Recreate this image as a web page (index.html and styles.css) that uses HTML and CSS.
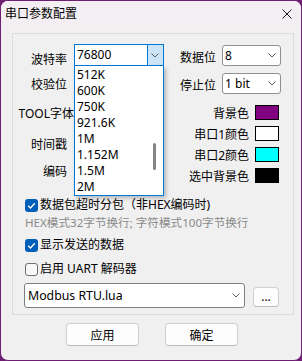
FILE: index.html
```html
<!DOCTYPE html>
<html lang="zh-CN">
<head>
    <meta charset="utf-8">
    <title>串口参数配置</title>
    <link rel="stylesheet" href="styles.css">
</head>
<body>
    <div class="window">
        <div class="titlebar">
            <span class="title">串口参数配置</span>
            <span class="close">
                <svg width="10" height="10" viewBox="0 0 10 10"><path d="M0.5 0.5 L9.5 9.5 M9.5 0.5 L0.5 9.5" stroke="#1b1b1b" stroke-width="1" fill="none"/></svg>
            </span>
        </div>

        <div class="group">
            <div class="top">
                <div class="left-labels">
                    <span class="lbl">波特率</span>
                    <span class="lbl">校验位</span>
                    <span class="lbl lbl-font">TOOL字体</span>
                    <span class="lbl">时间戳</span>
                    <span class="lbl">编码</span>
                </div>

                <div class="left-fields">
                    <div class="combo combo-open">
                        <span class="combo-text">76800</span>
                        <span class="combo-btn">
                            <svg class="chev" width="8" height="5" viewBox="0 0 8 5"><path d="M0.5 0.5 L4 4 L7.5 0.5" stroke="#5c5c5c" fill="none"/></svg>
                        </span>
                        <ul class="droplist">
                            <li>512K</li>
                            <li>600K</li>
                            <li>750K</li>
                            <li>921.6K</li>
                            <li>1M</li>
                            <li>1.152M</li>
                            <li>1.5M</li>
                            <li>2M</li>
                            <span class="thumb"></span>
                        </ul>
                    </div>
                </div>

                <div class="right">
                    <div class="field">
                        <span class="lbl">数据位</span>
                        <div class="combo combo-small">
                            <span class="combo-text">8</span>
                            <svg class="chev" width="8" height="5" viewBox="0 0 8 5"><path d="M0.5 0.5 L4 4 L7.5 0.5" stroke="#5c5c5c" fill="none"/></svg>
                        </div>
                    </div>
                    <div class="field">
                        <span class="lbl">停止位</span>
                        <div class="combo combo-small">
                            <span class="combo-text">1 bit</span>
                            <svg class="chev" width="8" height="5" viewBox="0 0 8 5"><path d="M0.5 0.5 L4 4 L7.5 0.5" stroke="#5c5c5c" fill="none"/></svg>
                        </div>
                    </div>

                    <div class="colors">
                        <div class="color-row"><span class="lbl">背景色</span><span class="swatch swatch-purple"></span></div>
                        <div class="color-row"><span class="lbl">串口1颜色</span><span class="swatch swatch-white"></span></div>
                        <div class="color-row"><span class="lbl">串口2颜色</span><span class="swatch swatch-cyan"></span></div>
                        <div class="color-row"><span class="lbl">选中背景色</span><span class="swatch swatch-black"></span></div>
                    </div>
                </div>
            </div>

            <div class="options">
                <div class="check check-on">
                    <span class="box"><svg width="13" height="13" viewBox="0 0 13 13"><path d="M3.2 6.7 L5.5 9 L9.8 4.3" stroke="#fff" stroke-width="1.3" fill="none"/></svg></span>
                    <span>数据包超时分包（非HEX编码时)</span>
                </div>
                <div class="hint">HEX模式32字节换行; 字符模式100字节换行</div>
                <div class="check check-on check-2">
                    <span class="box"><svg width="13" height="13" viewBox="0 0 13 13"><path d="M3.2 6.7 L5.5 9 L9.8 4.3" stroke="#fff" stroke-width="1.3" fill="none"/></svg></span>
                    <span>显示发送的数据</span>
                </div>
                <div class="check check-3">
                    <span class="box"></span>
                    <span>启用 UART 解码器</span>
                </div>
            </div>

            <div class="script-row">
                <div class="combo combo-wide">
                    <span class="combo-text">Modbus RTU.lua</span>
                    <svg class="chev" width="8" height="5" viewBox="0 0 8 5"><path d="M0.5 0.5 L4 4 L7.5 0.5" stroke="#5c5c5c" fill="none"/></svg>
                </div>
                <button class="btn btn-more">...</button>
            </div>
        </div>

        <div class="actions">
            <button class="btn btn-action">应用</button>
            <button class="btn btn-action">确定</button>
        </div>
    </div>
</body>
</html>
```

FILE: styles.css
```css
* {
    box-sizing: border-box;
}

html,
body {
    margin: 0;
}

body {
    background: #6e1f73;
    font-family: "Noto Sans", "Noto Sans CJK SC", sans-serif;
    font-size: 12px;
    color: #000;
}

.window {
    width: 302px;
    height: 361px;
    border: 1px solid #6e1f73;
    border-radius: 8px;
    background: #f0f0f0;
    overflow: hidden;
}

.titlebar {
    height: 29px;
    display: flex;
    align-items: center;
    justify-content: space-between;
    padding: 0 9px 4px 4px;
    background: #f3eef1;
}

.title {
    line-height: 16px;
}

.close {
    display: flex;
}

/* group box */

.group {
    width: 282px;
    height: 282px;
    margin: 3px 0 0 11px;
    border: 1px solid #dcdcdc;
    display: flex;
    flex-direction: column;
}

.top {
    display: flex;
    height: 148px;
}

.lbl {
    line-height: 14px;
    white-space: nowrap;
}

.left-labels {
    width: 54px;
    padding-top: 19px;
    display: grid;
    grid-template-rows: 25px 29px 31px 27px 14px;
    justify-items: end;
    align-content: start;
}

.lbl-font {
    margin-right: -7px;
}

.left-fields {
    margin-left: 7px;
    padding-top: 10px;
}

/* combo boxes */

.combo {
    position: relative;
    display: flex;
    align-items: center;
    background: #fff;
    border: 1px solid #8f8f8f;
    border-radius: 3px;
}

.combo-text {
    flex: 1;
    padding-left: 2px;
    line-height: 16px;
    white-space: nowrap;
}

.chev {
    display: block;
    margin-right: 4px;
}

.combo-open {
    width: 90px;
    height: 22px;
    border-color: #0078d7;
    border-radius: 0;
    z-index: 2;
}

.combo-btn {
    width: 17px;
    height: 22px;
    margin: -1px -1px -1px 0;
    display: flex;
    align-items: center;
    justify-content: center;
    background: #cce4f7;
    border: 1px solid #0078d7;
}

.combo-btn .chev {
    margin: 0 1px 0 0;
}

.droplist {
    position: absolute;
    top: 21px;
    left: -1px;
    width: 90px;
    height: 130px;
    margin: 0;
    padding: 1px 0 0 2px;
    list-style: none;
    background: #fff;
    border: 1px solid #0078d7;
    border-top: 0;
    box-shadow: 2px 2px 4px rgba(0, 0, 0, 0.25);
}

.droplist li {
    line-height: 16px;
}

.thumb {
    position: absolute;
    left: 78px;
    top: 77px;
    width: 3px;
    height: 27px;
    border-radius: 2px;
    background: #858585;
}

.right {
    width: 101px;
    margin-left: 16px;
    padding-top: 11px;
    display: flex;
    flex-direction: column;
}

.field {
    display: flex;
    align-items: center;
    gap: 6px;
    height: 21px;
}

.field + .field {
    margin-top: 7px;
}

.field .lbl {
    padding-top: 4px;
}

.combo-small {
    width: 59px;
    height: 21px;
}

/* colour swatches */

.colors {
    margin-top: 11px;
    padding-right: 2px;
    display: flex;
    flex-direction: column;
    gap: 6px;
}

.color-row {
    height: 15px;
    display: flex;
    align-items: center;
    justify-content: flex-end;
    gap: 6px;
}

.color-row .lbl {
    padding-top: 3px;
}

.swatch {
    width: 24px;
    height: 15px;
    border: 1px solid #000;
}

.swatch-purple {
    background: #800080;
}

.swatch-white {
    background: #fff;
}

.swatch-cyan {
    background: #00ffff;
}

.swatch-black {
    background: #000;
}

/* check boxes */

.options {
    padding: 15px 0 0 12px;
}

.check {
    height: 16px;
    line-height: 16px;
    display: flex;
    align-items: center;
    gap: 2px;
    white-space: nowrap;
}

.box {
    width: 13px;
    height: 13px;
    border-radius: 3px;
    border: 1px solid #6f6f6f;
    background: #f8f8f8;
    display: flex;
}

.check-on .box {
    border: 0;
    background: #005fb8;
}

.hint {
    margin-top: 2px;
    font-size: 11.6px;
    line-height: 16px;
    color: #8a8a8a;
    white-space: nowrap;
}

.check-2 {
    margin-top: 6px;
}

.check-3 {
    margin-top: 8px;
}

.script-row {
    margin: 6px 0 0 11px;
    display: flex;
    align-items: center;
    gap: 8px;
}

.combo-wide {
    width: 221px;
    height: 25px;
    border-color: #7f7f7f;
}

.combo-wide .combo-text {
    padding-left: 3px;
    font-size: 12.3px;
}

.combo-wide .chev {
    margin-right: 4px;
}

/* buttons */

.btn {
    padding: 0;
    font: inherit;
    color: #000;
    background: #fdfdfd;
    border: 1px solid #d0d0d0;
    border-bottom-color: #bdbdbd;
    border-radius: 4px;
}

.btn-more {
    width: 26px;
    height: 20px;
    line-height: 16px;
    margin-top: 2px;
}

.actions {
    margin-top: 8px;
    padding-left: 65px;
    display: flex;
    gap: 26px;
}

.btn-action {
    width: 73px;
    height: 23px;
}
```
